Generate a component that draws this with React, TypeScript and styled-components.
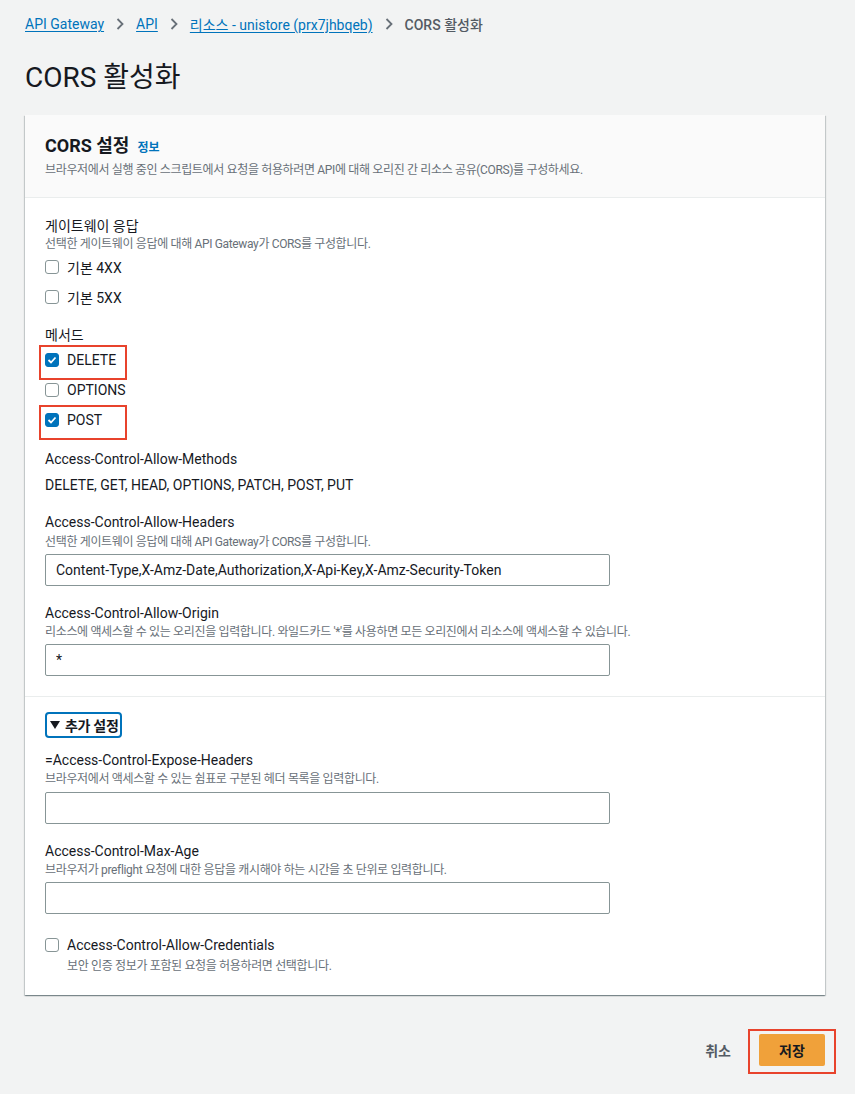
import React from "react";
import styled, { createGlobalStyle } from "styled-components";

const GlobalStyle = createGlobalStyle`
  html, body { margin: 0; padding: 0; }
  body {
    background: #f2f3f3;
    font-family: Roboto, "Noto Sans CJK KR", "Noto Sans", sans-serif;
    color: #16191f;
  }
  * { box-sizing: border-box; }
`;

const Page = styled.div`
  padding: 12px 30px 28px 25px;
`;

const Breadcrumbs = styled.nav`
  display: flex;
  align-items: center;
  gap: 12px;
  height: 24px;
  font-size: 14px;
`;

const Crumb = styled.a`
  color: #0073bb;
  text-decoration: underline;
  text-underline-offset: 2px;
  cursor: pointer;
`;

const CurrentCrumb = styled.span`
  color: #545b64;
  font-weight: 500;
`;

const Title = styled.h1`
  margin: 24px 0 19px;
  font-size: 28px;
  line-height: 36px;
  font-weight: 400;
  color: #16191f;
`;

const Card = styled.section`
  background: #fff;
  box-shadow: 0 1px 1px 0 rgba(0, 28, 36, 0.3), 1px 1px 1px 0 rgba(0, 28, 36, 0.15),
    -1px 1px 1px 0 rgba(0, 28, 36, 0.15);
`;

const CardHeader = styled.header`
  background: #fafafa;
  padding: 20px 20px 19px;
  border-bottom: 1px solid #eaeded;
`;

const CardTitle = styled.h2`
  margin: 0;
  font-size: 18px;
  line-height: 22px;
  font-weight: 700;
  display: flex;
  align-items: baseline;
  gap: 8px;
`;

const InfoLink = styled.a`
  font-size: 12px;
  font-weight: 700;
  color: #0073bb;
`;

const Section = styled.div<{ $divider?: boolean; $pt: number; $pb: number }>`
  padding: ${(p) => p.$pt}px 20px ${(p) => p.$pb}px;
  border-bottom: ${(p) => (p.$divider ? "1px solid #eaeded" : "none")};
`;

const Label = styled.div<{ $mt?: number }>`
  margin-top: ${(p) => p.$mt ?? 0}px;
  font-size: 14px;
  line-height: 20px;
  color: #16191f;
`;

const Value = styled.div<{ $mt?: number }>`
  margin-top: ${(p) => p.$mt ?? 0}px;
  font-size: 14px;
  line-height: 20px;
  color: #16191f;
`;

const Hint = styled.div<{ $mt?: number; $indent?: number }>`
  margin-top: ${(p) => p.$mt ?? 0}px;
  margin-left: ${(p) => p.$indent ?? 0}px;
  font-size: 12px;
  line-height: 16px;
  letter-spacing: -0.35px;
  color: #687078;
`;

const TextInput = styled.input<{ $mt?: number }>`
  display: block;
  margin-top: ${(p) => p.$mt ?? 0}px;
  width: 565px;
  height: 32px;
  padding: 0 10px;
  border: 1px solid #879596;
  border-radius: 2px;
  font-family: inherit;
  font-size: 14px;
  color: #16191f;
  background: #fff;
  outline: none;
`;

const CheckRow = styled.label<{ $h?: number; $mt?: number; $marked?: boolean }>`
  position: relative;
  display: flex;
  align-items: center;
  gap: 8px;
  height: ${(p) => p.$h ?? 30}px;
  margin-top: ${(p) => p.$mt ?? 0}px;
  font-size: 14px;
  color: #16191f;
  &::after {
    content: "";
    display: ${(p) => (p.$marked ? "block" : "none")};
    position: absolute;
    left: -6px;
    top: 0;
    width: 84px;
    height: 31px;
    border: 2px solid #e8432c;
    pointer-events: none;
  }
`;

const Box = styled.span<{ $checked?: boolean }>`
  width: 14px;
  height: 14px;
  border-radius: 3px;
  border: 1px solid ${(p) => (p.$checked ? "#0073bb" : "#879596")};
  background: ${(p) => (p.$checked ? "#0073bb" : "#fff")};
  display: inline-flex;
  align-items: center;
  justify-content: center;
  flex: none;
`;

const Toggle = styled.button`
  display: flex;
  align-items: center;
  gap: 5px;
  height: 26px;
  padding: 0 1px 0 3px;
  border: 2px solid #0073bb;
  border-radius: 4px;
  background: #fff;
  font-family: inherit;
  font-size: 14px;
  font-weight: 700;
  letter-spacing: -0.3px;
  color: #16191f;
`;

const Footer = styled.div`
  margin-top: 39px;
  display: flex;
  justify-content: flex-end;
  align-items: center;
  gap: 28px;
`;

const LinkButton = styled.button`
  background: none;
  border: none;
  padding: 0;
  font-family: inherit;
  font-size: 14px;
  font-weight: 700;
  color: #545b64;
`;

const PrimaryButton = styled.button`
  position: relative;
  width: 66px;
  height: 32px;
  border: none;
  border-radius: 2px;
  background: #f0a13a;
  font-family: inherit;
  font-size: 14px;
  font-weight: 700;
  color: #16191f;
  &::after {
    content: "";
    position: absolute;
    left: -11px;
    right: -11px;
    top: -5px;
    bottom: -8px;
    border: 2px solid #e8432c;
    pointer-events: none;
  }
`;

const Chevron = () => (
  <svg width="8" height="12" viewBox="0 0 8 12">
    <polyline points="1.5,1 6.5,6 1.5,11" fill="none" stroke="#687078" strokeWidth="1.8" />
  </svg>
);

const Checkbox = ({ checked }: { checked?: boolean }) => (
  <Box $checked={checked}>
    {checked && (
      <svg width="10" height="10" viewBox="0 0 10 10">
        <polyline points="1.5,5 4,7.5 8.5,2.5" fill="none" stroke="#fff" strokeWidth="1.8" />
      </svg>
    )}
  </Box>
);

export default function App() {
  return (
    <>
      <GlobalStyle />
      <Page>
        <Breadcrumbs>
          <Crumb>API Gateway</Crumb>
          <Chevron />
          <Crumb>API</Crumb>
          <Chevron />
          <Crumb>리소스 - unistore (prx7jhbqeb)</Crumb>
          <Chevron />
          <CurrentCrumb>CORS 활성화</CurrentCrumb>
        </Breadcrumbs>
        <Title>CORS 활성화</Title>
        <Card>
          <CardHeader>
            <CardTitle>
              CORS 설정 <InfoLink>정보</InfoLink>
            </CardTitle>
            <Hint $mt={3}>
              브라우저에서 실행 중인 스크립트에서 요청을 허용하려면 API에 대해 오리진 간 리소스 공유(CORS)를 구성하세요.
            </Hint>
          </CardHeader>
          <Section $divider $pt={18} $pb={20}>
            <Label>게이트웨이 응답</Label>
            <Hint>선택한 게이트웨이 응답에 대해 API Gateway가 CORS를 구성합니다.</Hint>
            <CheckRow>
              <Checkbox /> 기본 4XX
            </CheckRow>
            <CheckRow>
              <Checkbox /> 기본 5XX
            </CheckRow>
            <Label $mt={13}>메서드</Label>
            <CheckRow $marked>
              <Checkbox checked /> DELETE
            </CheckRow>
            <CheckRow>
              <Checkbox /> OPTIONS
            </CheckRow>
            <CheckRow $marked>
              <Checkbox checked /> POST
            </CheckRow>
            <Label $mt={14}>Access-Control-Allow-Methods</Label>
            <Value $mt={6}>DELETE, GET, HEAD, OPTIONS, PATCH, POST, PUT</Value>
            <Label $mt={17}>Access-Control-Allow-Headers</Label>
            <Hint $mt={2}>선택한 게이트웨이 응답에 대해 API Gateway가 CORS를 구성합니다.</Hint>
            <TextInput
              $mt={4}
              readOnly
              value="Content-Type,X-Amz-Date,Authorization,X-Api-Key,X-Amz-Security-Token"
            />
            <Label $mt={17}>Access-Control-Allow-Origin</Label>
            <Hint $mt={1}>
              리소스에 액세스할 수 있는 오리진을 입력합니다. 와일드카드 '*'를 사용하면 모든 오리진에서 리소스에 액세스할 수 있습니다.
            </Hint>
            <TextInput $mt={4} readOnly value="*" />
          </Section>
          <Section $pt={15} $pb={21}>
            <Toggle>
              <svg width="10" height="8" viewBox="0 0 10 8">
                <polygon points="0,0 10,0 5,8" fill="#16191f" />
              </svg>
              추가 설정
            </Toggle>
            <Label $mt={12}>=Access-Control-Expose-Headers</Label>
            <Hint $mt={1}>브라우저에서 액세스할 수 있는 쉼표로 구분된 헤더 목록을 입력합니다.</Hint>
            <TextInput $mt={5} readOnly value="" />
            <Label $mt={17}>Access-Control-Max-Age</Label>
            <Hint $mt={1}>브라우저가 preflight 요청에 대한 응답을 캐시해야 하는 시간을 초 단위로 입력합니다.</Hint>
            <TextInput $mt={4} readOnly value="" />
            <CheckRow $h={20} $mt={21}>
              <Checkbox /> Access-Control-Allow-Credentials
            </CheckRow>
            <Hint $mt={3} $indent={22}>
              보안 인증 정보가 포함된 요청을 허용하려면 선택합니다.
            </Hint>
          </Section>
        </Card>
        <Footer>
          <LinkButton>취소</LinkButton>
          <PrimaryButton>저장</PrimaryButton>
        </Footer>
      </Page>
    </>
  );
}
